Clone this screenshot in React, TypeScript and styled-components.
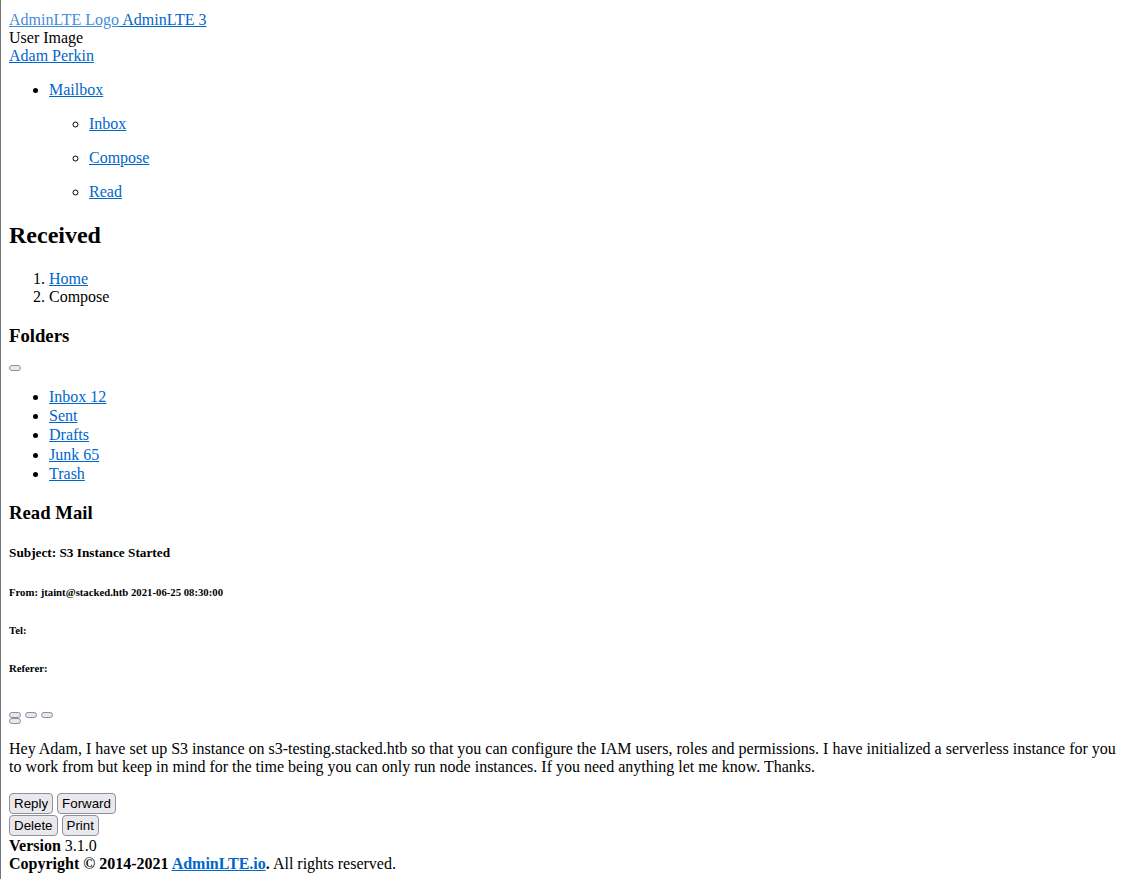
import React from "react";
import styled, { createGlobalStyle } from "styled-components";

const Global = createGlobalStyle`
  html {
    border-left: 1px solid #767676;
    background: #ffffff;
  }
  body {
    margin: 8px 0 8px 8px;
    font-family: "Liberation Serif", "Times New Roman", serif;
    font-size: 16px;
    line-height: 18px;
    color: #000000;
  }
`;

const Page = styled.div`
  display: block;
  padding-top: 3px;
`;

const Link = styled.a`
  color: #0066cc;
  text-decoration: underline;
  cursor: pointer;
`;

const LogoAlt = styled.span`
  opacity: 0.75;
`;

const Line = styled.div`
  display: block;
`;

const NavList = styled.ul`
  margin: 16px 0;
  padding-left: 40px;
  list-style: disc;
`;

const SubList = styled.ul`
  margin: 0;
  padding-left: 40px;
  list-style: circle;
`;

const SubItem = styled.li`
  margin: 16px 0;
`;

const PageTitle = styled.h1`
  font-size: 24px;
  font-weight: bold;
  line-height: 29px;
  margin: 19.92px 0;
`;

const Crumbs = styled.ol`
  margin: 16px 0;
  padding-left: 40px;
  list-style: decimal;
`;

const CardTitle = styled.h3`
  font-size: 18.72px;
  font-weight: bold;
  line-height: 21.5px;
  margin: 18.72px 0;
`;

const TinyButton = styled.button`
  display: block;
  width: 12px;
  height: 6px;
  padding: 0;
  margin: 0;
  border: 1px solid #8f8f9d;
  border-radius: 3px;
  background: #e9e9ed;
`;

const FolderList = styled.ul`
  margin: 16px 0;
  padding-left: 40px;
  list-style: disc;
`;

const FolderItem = styled.li`
  line-height: 19.25px;
`;

const Subject = styled.h5`
  font-size: 13.28px;
  font-weight: bold;
  line-height: 16px;
  margin: 22.18px 0;
`;

const Meta = styled.h6`
  font-size: 10.72px;
  font-weight: bold;
  line-height: 13px;
  margin: 24.97px 0;
`;

const Controls = styled.div`
  display: flex;
  flex-direction: column;
  margin-top: 37px;
`;

const TinyRow = styled.div`
  display: flex;
  gap: 4px;
`;

const Message = styled.p`
  margin: 16px 0;
`;

const ButtonRows = styled.div`
  display: flex;
  flex-direction: column;
  gap: 1px;
  padding-top: 1px;
`;

const ButtonRow = styled.div`
  display: flex;
  gap: 4px;
`;

const ActionButton = styled.button`
  height: 21px;
  padding: 0 4px;
  margin: 0;
  border: 1px solid #8f8f9d;
  border-radius: 4px;
  background: #e9e9ed;
  font-family: "Liberation Sans", Arial, sans-serif;
  font-size: 13.33px;
  color: #000000;
  line-height: 19px;
`;

const Footer = styled.footer`
  display: block;
  padding-top: 1px;
`;

const BoldLink = styled(Link)`
  font-weight: bold;
`;

export default function App() {
  return (
    <Page>
      <Global />
      <Line>
        <Link href="#">
          <LogoAlt>AdminLTE Logo</LogoAlt> AdminLTE 3
        </Link>
      </Line>
      <Line>User Image</Line>
      <Line>
        <Link href="#">Adam Perkin</Link>
      </Line>
      <NavList>
        <li>
          <Link href="#">Mailbox</Link>
          <SubList>
            <SubItem>
              <Link href="#">Inbox</Link>
            </SubItem>
            <SubItem>
              <Link href="#">Compose</Link>
            </SubItem>
            <SubItem>
              <Link href="#">Read</Link>
            </SubItem>
          </SubList>
        </li>
      </NavList>
      <PageTitle>Received</PageTitle>
      <Crumbs>
        <li>
          <Link href="#">Home</Link>
        </li>
        <li>Compose</li>
      </Crumbs>
      <CardTitle>Folders</CardTitle>
      <TinyButton type="button" aria-label="Collapse" />
      <FolderList>
        <FolderItem>
          <Link href="#">Inbox 12</Link>
        </FolderItem>
        <FolderItem>
          <Link href="#">Sent</Link>
        </FolderItem>
        <FolderItem>
          <Link href="#">Drafts</Link>
        </FolderItem>
        <FolderItem>
          <Link href="#">Junk 65</Link>
        </FolderItem>
        <FolderItem>
          <Link href="#">Trash</Link>
        </FolderItem>
      </FolderList>
      <CardTitle>Read Mail</CardTitle>
      <Subject>Subject: S3 Instance Started</Subject>
      <Meta>From: jtaint@stacked.htb 2021-06-25 08:30:00</Meta>
      <Meta>Tel:</Meta>
      <Meta>Referer:</Meta>
      <Controls>
        <TinyRow>
          <TinyButton type="button" aria-label="Delete" />
          <TinyButton type="button" aria-label="Reply" />
          <TinyButton type="button" aria-label="Forward" />
        </TinyRow>
        <TinyRow>
          <TinyButton type="button" aria-label="Print" />
        </TinyRow>
      </Controls>
      <Message>
        Hey Adam, I have set up S3 instance on s3-testing.stacked.htb so that
        you can configure the IAM users, roles and permissions. I have
        initialized a serverless instance for you to work from but keep in mind
        for the time being you can only run node instances. If you need
        anything let me know. Thanks.
      </Message>
      <ButtonRows>
        <ButtonRow>
          <ActionButton type="button">Reply</ActionButton>
          <ActionButton type="button">Forward</ActionButton>
        </ButtonRow>
        <ButtonRow>
          <ActionButton type="button">Delete</ActionButton>
          <ActionButton type="button">Print</ActionButton>
        </ButtonRow>
      </ButtonRows>
      <Footer>
        <Line>
          <b>Version</b> 3.1.0
        </Line>
        <Line>
          <strong>
            Copyright © 2014-2021 <BoldLink href="#">AdminLTE.io</BoldLink>.
          </strong>{" "}
          All rights reserved.
        </Line>
      </Footer>
    </Page>
  );
}
